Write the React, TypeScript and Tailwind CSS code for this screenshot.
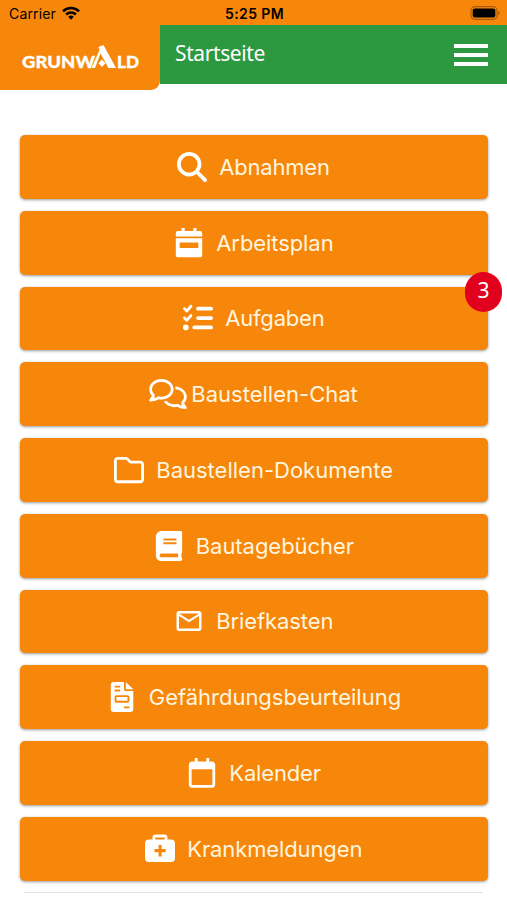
import { FaBook } from "react-icons/fa";
import {
  FaListCheck,
  FaMagnifyingGlass,
  FaRegComments,
  FaRegFolder,
} from "react-icons/fa6";
import { MdMailOutline } from "react-icons/md";

type IconProps = { className?: string };

function WeekIcon({ className }: IconProps) {
  return (
    <svg viewBox="0 0 30 30" className={className} fill="currentColor">
      <path d="M7.5 0h3.2v3h8.6V0h3.2v3H26a2.2 2.2 0 0 1 2.2 2.2v3.3H1.8V5.2A2.2 2.2 0 0 1 4 3h3.5z" />
      <path
        fillRule="evenodd"
        d="M1.8 10.3h26.4v16.4A2.6 2.6 0 0 1 25.6 29.3H4.4a2.6 2.6 0 0 1-2.6-2.6zm3.9 4.2v5.6h18.6v-5.6z"
      />
    </svg>
  );
}

function InvoiceIcon({ className }: IconProps) {
  return (
    <svg viewBox="0 0 30 30" className={className} fill="currentColor">
      <path
        fillRule="evenodd"
        d="M6.8 0H17v7.5a1.5 1.5 0 0 0 1.5 1.5h7.8v18a3 3 0 0 1-3 3H6.8a3 3 0 0 1-3-3V3a3 3 0 0 1 3-3zm.8 3.7v1.8h5.6V3.7zm0 3.9v1.8h5.6V7.6zm1.9 5.6a1.9 1.9 0 0 0-1.9 1.9v3.7a1.9 1.9 0 0 0 1.9 1.9h11a1.9 1.9 0 0 0 1.9-1.9v-3.7a1.9 1.9 0 0 0-1.9-1.9zm0 1.9h11v3.7h-11zm7.4 9.3v1.9h5.6v-1.9z"
      />
      <path d="M18.8 0v7.3h7.5z" />
    </svg>
  );
}

function CalendarIcon({ className }: IconProps) {
  return (
    <svg viewBox="0 0 30 30" className={className} fill="currentColor">
      <path
        fillRule="evenodd"
        d="M7.8 0h2.8v3.6h8.8V0h2.8v3.6h2.5a3.5 3.5 0 0 1 3.5 3.5v19.1a3.5 3.5 0 0 1-3.5 3.5H5.3a3.5 3.5 0 0 1-3.5-3.5V7.1a3.5 3.5 0 0 1 3.5-3.5h2.5zM4.6 11.2v14.9a.9.9 0 0 0 .9.9h19a.9.9 0 0 0 .9-.9V11.2z"
      />
    </svg>
  );
}

function MedicalIcon({ className }: IconProps) {
  return (
    <svg viewBox="0 0 30 30" className={className} fill="currentColor">
      <path
        fillRule="evenodd"
        d="M7.5 5.5V3.5a2.9 2.9 0 0 1 2.9-2.9h9.2a2.9 2.9 0 0 1 2.9 2.9v2H26a4 4 0 0 1 4 4v14.6a4 4 0 0 1-4 4H4a4 4 0 0 1-4-4V9.500a4 4 0 0 1 4-4zm2.800 0h9.400V3.400h-9.400zm3.300 5.500v4.100H9.500v3.200h4.100v4.100h3v-4.100h4.100v-3.200h-4.100V11z"
      />
    </svg>
  );
}

const menuItems = [
  { label: "Abnahmen", icon: FaMagnifyingGlass, width: "w-[111px]", tracking: "tracking-[-0.2px]" },
  { label: "Arbeitsplan", icon: WeekIcon, width: "w-[117px]", tracking: "tracking-[-0.08px]" },
  { label: "Aufgaben", icon: FaListCheck, width: "w-[99px]", tracking: "tracking-[-0.2px]", badge: 3 },
  { label: "Baustellen-Chat", icon: FaRegComments, width: "w-[167px]", tracking: "tracking-[0.01px]", wide: true },
  { label: "Baustellen-Dokumente", icon: FaRegFolder, width: "w-[237px]", tracking: "tracking-[0px]" },
  { label: "Bautagebücher", icon: FaBook, width: "w-[158px]", tracking: "tracking-[-0.05px]" },
  { label: "Briefkasten", icon: MdMailOutline, width: "w-[117px]", tracking: "tracking-[-0.1px]" },
  { label: "Gefährdungsbeurteilung", icon: InvoiceIcon, width: "w-[252px]", tracking: "tracking-[-0.02px]" },
  { label: "Kalender", icon: CalendarIcon, width: "w-[91px]", tracking: "tracking-[-0.15px]" },
  { label: "Krankmeldungen", icon: MedicalIcon, width: "w-[175px]", tracking: "tracking-[-0.12px]" },
];

function Logo() {
  return (
    <svg
      viewBox="0 0 120 30"
      className="w-[120px] h-[30px] fill-white stroke-white"
      fontFamily="Lato, sans-serif"
      fontWeight="900"
      fontSize="16"
      strokeWidth="0.3"
    >
      <text x="1" y="24" textLength="73" lengthAdjust="spacingAndGlyphs">
        GRUNW
      </text>
      <path d="m77.500 3 5-2L95 24h-7.500L79.500 9.500 74 24h-3.500L78.500 6z" stroke="none" />
      <path d="m81 15.500 3.500 3.800-3.500 3.800-3.500-3.800z" stroke="none" />
      <text x="96" y="24" textLength="22" lengthAdjust="spacingAndGlyphs">
        LD
      </text>
    </svg>
  );
}

function StatusBar() {
  return (
    <div className="grid grid-cols-3 items-center h-[25px] pl-[9px] pr-[7px] pt-0.5 bg-[#f7870a] text-black text-sm font-[Inter,sans-serif]">
      <div className="flex items-center gap-1.5">
        <span className="w-[47px] tracking-[0.15px]">Carrier</span>
        <svg viewBox="0 0 18 14" className="w-[18px] h-3.5 -mt-0.5" fill="none" stroke="currentColor" strokeWidth="2.6">
          <path d="M1 5.3a11.3 11.3 0 0 1 16 0" />
          <path d="M4.1 8.5a7 7 0 0 1 9.8 0" />
          <path d="m6.2 10.8 2.8 2.9 2.8-2.9a4 4 0 0 0-5.6 0z" fill="currentColor" stroke="none" />
        </svg>
      </div>
      <span className="text-center font-semibold whitespace-nowrap tracking-[0.4px]">5:25 PM</span>
      <svg viewBox="0 0 30 14" className="w-[30px] h-3.5 justify-self-end -mt-0.5">
        <rect x="1" y=".7" width="26" height="12.6" rx="3.8" fill="none" stroke="#a85c08" strokeWidth="1.2" />
        <rect x="2.7" y="2.4" width="22.6" height="9.2" rx="2.2" />
        <path d="M28.2 4.8v4.4q1.6-.7 1.6-2.2t-1.6-2.2z" fill="#a85c08" />
      </svg>
    </div>
  );
}

function Header() {
  return (
    <header className="flex items-start h-[65px]">
      <div className="w-[160px] h-[64.5px] pl-[21px] pt-[18.5px] bg-[#f7870a] rounded-br-[9px] shrink-0">
        <Logo />
      </div>
      <div className="flex flex-1 justify-between h-[58.5px] pl-[15px] pr-[19px] bg-[#2c9940] text-white">
        <h1 className="mt-[13px] text-[21px] leading-[30px] tracking-[-0.4px] font-['Noto_Sans',sans-serif]">
          Startseite
        </h1>
        <button className="flex flex-col gap-[5px] mt-[18.5px]" aria-label="Menü">
          <span className="w-[34px] h-1 bg-white" />
          <span className="w-[34px] h-1 bg-white" />
          <span className="w-[34px] h-1 bg-white" />
        </button>
      </div>
    </header>
  );
}

function App() {
  return (
    <div className="h-[900px] overflow-hidden bg-white">
      <StatusBar />
      <Header />
      <main className="flex flex-col gap-3 px-5 pt-[45px]">
        {menuItems.map(({ label, icon: Icon, width, tracking, wide, badge }) => (
          <button
            key={label}
            className="relative flex items-center justify-center w-[467.5px] h-[63.75px] shrink-0 rounded-[5px] bg-[#f7870a] text-white shadow-[0_1px_3px_rgba(0,0,0,0.4)]"
          >
            <Icon className={wide ? "w-[38px] h-[30px] mr-1" : "size-[30px] mr-3"} />
            <span
              className={`${width} ${tracking} pt-px text-left whitespace-nowrap text-[22px] text-[#fff5df] font-[Inter,sans-serif]`}
            >
              {label}
            </span>
            {badge && (
              <span className="absolute -top-[15px] -right-[14.5px] flex items-center justify-center w-[37px] h-10 pb-0.5 rounded-full bg-[#e2001f] text-[21px] text-white font-['Noto_Sans',sans-serif]">
                {badge}
              </span>
            )}
          </button>
        ))}
        <div className="h-px mx-1 -mt-[1px] shrink-0 bg-[#e3e3e1]" />
      </main>
    </div>
  );
}

export default App;
